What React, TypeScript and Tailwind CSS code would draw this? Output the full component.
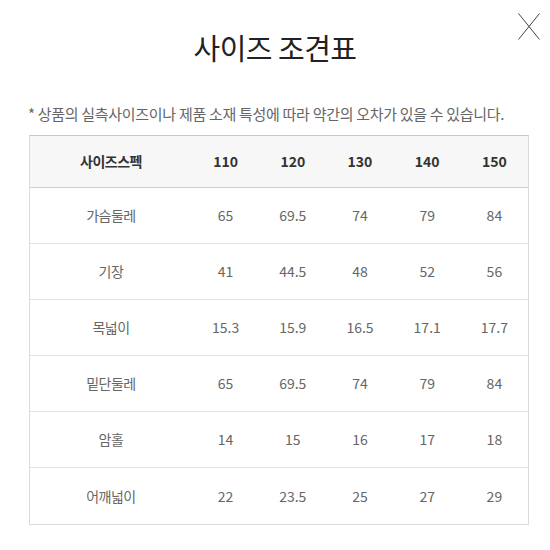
import React from "react";

const sizes = ["110", "120", "130", "140", "150"];

const rows: { label: string; values: string[] }[] = [
  { label: "가슴둘레", values: ["65", "69.5", "74", "79", "84"] },
  { label: "기장", values: ["41", "44.5", "48", "52", "56"] },
  { label: "목넓이", values: ["15.3", "15.9", "16.5", "17.1", "17.7"] },
  { label: "밑단둘레", values: ["65", "69.5", "74", "79", "84"] },
  { label: "암홀", values: ["14", "15", "16", "17", "18"] },
  { label: "어깨넓이", values: ["22", "23.5", "25", "27", "29"] },
];

const font = {
  fontFamily: '"Noto Sans CJK KR", "Liberation Sans", sans-serif',
};

export default function App() {
  return (
    <div className="w-[550px] h-[550px] bg-white relative" style={font}>
      {/* Close */}
      <button className="absolute left-[518px] top-[13px] w-[22px] h-[27px]">
        <svg width="22" height="27" viewBox="0 0 22 27">
          <line x1="0.5" y1="0.5" x2="21.5" y2="26.5" stroke="#444" strokeWidth="1" />
          <line x1="21.5" y1="0.5" x2="0.5" y2="26.5" stroke="#444" strokeWidth="1" />
        </svg>
      </button>

      {/* Title */}
      <div className="pt-[27px] h-[104px] text-center">
        <h1 className="text-[29px] leading-[40px] text-[#222] tracking-[-0.5px]">사이즈 조견표</h1>
      </div>

      <p className="pl-[28px] text-[15px] leading-[20px] text-[#666] tracking-[-0.3px]">
        * 상품의 실측사이즈이나 제품 소재 특성에 따라 약간의 오차가 있을 수 있습니다.
      </p>

      {/* Table */}
      <div className="mt-[11px] ml-[29px] w-[500px] border border-[#dcdcdc] border-t-[#c8c8c8]">
        <div className="grid grid-cols-[162px_repeat(5,1fr)] h-[52px] bg-[#f7f7f7] border-b border-[#cfcfcf] items-center text-[14px] font-bold text-[#333]">
          <div className="text-center tracking-[-0.5px]">사이즈스펙</div>
          {sizes.map((s) => (
            <div key={s} className="text-center">
              {s}
            </div>
          ))}
        </div>
        {rows.map((r, i) => (
          <div
            key={r.label}
            className={
              "grid grid-cols-[162px_repeat(5,1fr)] h-[56px] items-center text-[14px] text-[#666] " +
              (i < rows.length - 1 ? "border-b border-[#e3e3e3]" : "")
            }
          >
            <div className="text-center tracking-[-0.5px]">{r.label}</div>
            {r.values.map((v, j) => (
              <div key={j} className="text-center">
                {v}
              </div>
            ))}
          </div>
        ))}
      </div>
    </div>
  );
}
